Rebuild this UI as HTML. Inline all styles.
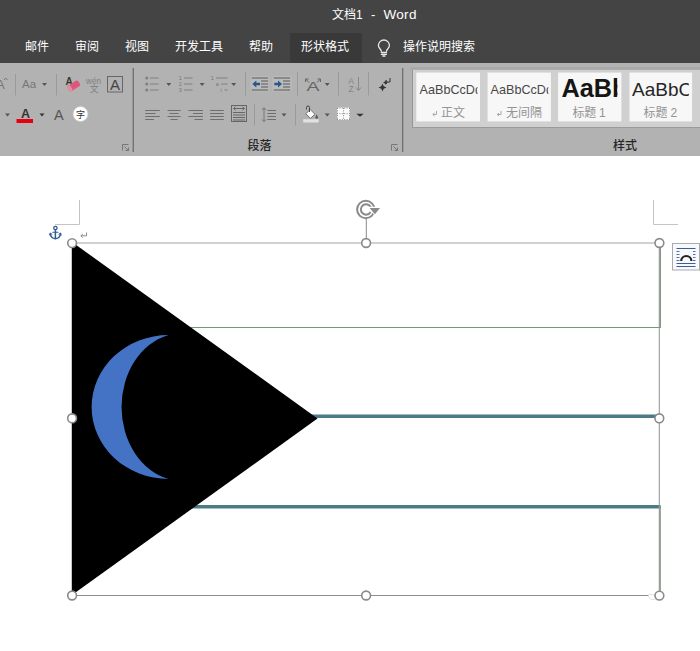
<!DOCTYPE html>
<html><head><meta charset="utf-8">
<style>
html,body{margin:0;padding:0;}
body{width:700px;height:651px;overflow:hidden;background:#fff;position:relative;font-family:"Liberation Sans","Noto Sans CJK SC",sans-serif;}
.abs{position:absolute;}
#title{left:0;top:0;width:700px;height:63px;background:#444444;}
#ribbon{left:0;top:63px;width:700px;height:92.5px;background:#b2b2b2;}
.t{position:absolute;color:#fff;font-size:12px;line-height:14px;white-space:nowrap;}
.lab{position:absolute;color:#262626;font-weight:500;font-size:12px;line-height:14px;white-space:nowrap;}
#acttab{left:290px;top:33px;width:72px;height:30px;background:#393939;}
.sep{position:absolute;width:1px;background:#7a7a7a;}
.cell{position:absolute;top:72px;height:50px;width:63px;background:#eeeeee;overflow:hidden;}
.cell .s{position:absolute;left:0;width:63px;text-align:center;white-space:nowrap;color:#222;}
.cell .n{position:absolute;left:0;width:63px;text-align:center;top:32px;font-size:12px;line-height:14px;color:#777;white-space:nowrap;}
</style></head><body>
<div id="title" class="abs"></div>
<div id="acttab" class="abs"></div>
<div class="t" style="left:332px;top:7px;font-size:12px;line-height:16px;">文档1</div><div class="t" style="left:371px;top:7px;font-size:13px;line-height:16px;">-</div><div class="t" style="left:383.500px;top:7px;font-size:13.500px;line-height:16px;letter-spacing:0.300px;">Word</div>
<div class="t" style="left:25px;top:40px;">邮件</div>
<div class="t" style="left:75px;top:40px;">审阅</div>
<div class="t" style="left:125px;top:40px;">视图</div>
<div class="t" style="left:175px;top:40px;">开发工具</div>
<div class="t" style="left:249px;top:40px;">帮助</div>
<div class="t" style="left:301px;top:40px;">形状格式</div>
<div class="t" style="left:403px;top:40px;">操作说明搜索</div>
<svg class="abs" style="left:374px;top:36px;" width="20" height="24" viewBox="374 36 20 24"><g fill="none" stroke="#e8e8e8" stroke-width="1.300" stroke-linecap="round"><path d="M381.300 51.300c0-2.300-2.900-3-2.900-5.800a5.500 5.500 0 0 1 11 0c0 2.800-2.900 3.500-2.900 5.800"/><path d="M381.300 52.500h5.200M381.300 54.300h5.200M382.800 56h2.200"/></g></svg>
<div id="ribbon" class="abs"></div>
<div class="sep" style="left:132px;top:68px;height:83.500px;width:1px;background:#969696;"></div><div class="sep" style="left:133px;top:68px;height:83.500px;width:1px;background:#737373;"></div>
<div class="sep" style="left:402px;top:68px;height:83.500px;width:1px;background:#707070;"></div><div class="sep" style="left:403px;top:68px;height:83.500px;width:1px;background:#9c9c9c;"></div>

<svg class="abs" style="left:0;top:62px;" width="700" height="93" viewBox="0 62 700 93" font-family="'Liberation Sans','Noto Sans CJK SC',sans-serif">
<!-- thin separators -->
<g stroke="#9a9a9a" stroke-width="1">
<path d="M15.5 74V95.5M56.5 74V95.5M245.5 72V95.5M297.5 72V95.5M338.5 72V95.5M368.5 72V95.5M254.5 104V125.5M295.5 104V125.5"/>
</g>
<!-- FONT GROUP row1 -->
<text x="-4" y="89" font-size="13" fill="#777">A</text>
<path d="M4 80l1.7-2 1.7 2" fill="none" stroke="#777" stroke-width="1"/>
<text x="22" y="88" font-size="11.5" fill="#777">Aa</text>
<path d="M42 83h5l-2.5 3z" fill="#555"/>
<!-- eraser -->
<text x="65.5" y="85" font-size="10" font-weight="bold" fill="#2f3f2f">A</text>
<g transform="rotate(-32 73.5 86)"><rect x="67.5" y="82.8" width="12.5" height="6.5" rx="1.8" fill="#e0557a"/><rect x="67.5" y="82.8" width="3.5" height="6.500" rx="1.5" fill="#e88aa2"/></g>
<!-- wen -->
<text x="86" y="83.8" font-size="8.5" fill="#808080" textLength="15" lengthAdjust="spacingAndGlyphs">wén</text>
<text x="89.7" y="91.8" font-size="9" fill="#808080">文</text>
<!-- boxed A -->
<rect x="107.5" y="76.5" width="15" height="15.5" fill="none" stroke="#666" stroke-width="1"/>
<text x="110" y="89.5" font-size="14" fill="#444" textLength="10" lengthAdjust="spacingAndGlyphs">A</text>
<!-- row2 -->
<path d="M5 113.5h5l-2.5 3z" fill="#555"/>
<text x="21" y="118" font-size="12.5" font-weight="bold" fill="#333">A</text>
<rect x="16.5" y="119" width="16.5" height="4" fill="#e60012"/>
<path d="M39.5 113.5h5l-2.5 3z" fill="#333"/>
<text x="54" y="120" font-size="14.5" fill="#555">A</text>
<circle cx="80.5" cy="114" r="7.5" fill="#fff" stroke="#c9c9c9" stroke-width="0.8"/>
<text x="76" y="117.5" font-size="9" fill="#333">字</text>
<!-- dialog launchers -->
<g fill="none" stroke="#777" stroke-width="1">
<path d="M122.5 150.5V144.5H128.5"/><path d="M124.5 146.5l4 4M128.5 147.5v3h-3"/>
<path d="M391.5 150.5V144.5H397.5"/><path d="M393.5 146.5l4 4M397.5 147.5v3h-3"/>
</g>
<!-- PARAGRAPH row1 : bullets -->
<g fill="#808080">
<circle cx="146.8" cy="78" r="1.6"/><circle cx="146.8" cy="84" r="1.6"/><circle cx="146.8" cy="90" r="1.6"/>
</g>
<g stroke="#808080" stroke-width="1.2">
<path d="M150 78H158.7M150 84H158.7M150 90H158.7"/>
<path d="M184 78H192.5M184 84H192.5M184 90H192.5"/>
<path d="M216 78H227.7M221 84H227.7M224.5 90H227.7"/>
</g>
<path d="M166.3 83h5l-2.5 3z" fill="#555"/>
<g font-size="5.5" fill="#777" text-anchor="middle">
<text x="180.3" y="80">1</text><text x="180.3" y="86">2</text><text x="180.3" y="92">3</text>
<text x="212.3" y="80">1</text><text x="217.3" y="86">a</text><text x="221" y="92">i</text>
</g>
<path d="M199.6 83h5l-2.5 3z" fill="#555"/>
<path d="M231.2 83h5l-2.5 3z" fill="#555"/>
<!-- indents -->
<rect x="250.5" y="76" width="19" height="15.5" rx="1.5" fill="#bbbbbb"/><rect x="272.5" y="76" width="19" height="15.5" rx="1.5" fill="#bbbbbb"/>
<g stroke="#5a5a5a" stroke-width="1.2">
<path d="M251.7 78H268.2M261 81H268.2M261 84H268.2M261 87H268.2M251.7 90H268.2"/>
<path d="M273.7 78H290.2M283 81H290.2M283 84H290.2M283 87H290.2M273.7 90H290.2"/>
</g>
<g fill="#27578f">
<path d="M252.3 84l4-3.6v2.3h3.7v2.6h-3.7v2.3z"/>
<path d="M282 84l-4-3.6v2.3h-3.7v2.6h3.7v2.3z"/>
</g>
<!-- asian layout A -->
<text x="306.5" y="90.5" font-size="12" fill="#666" textLength="13" lengthAdjust="spacingAndGlyphs">A</text>
<g fill="none" stroke="#666" stroke-width="1"><path d="M305.5 82v-3h3M305.5 79l3.5 3.5"/><path d="M320.5 82v-3h-3M320.500 79l-3.500 3.500"/></g>
<path d="M324.7 83h5l-2.5 3z" fill="#555"/>
<!-- sort -->
<g font-size="8.5" fill="#858585" text-anchor="middle"><text x="351.200" y="83.800">A</text><text x="351.200" y="91.500">Z</text></g>
<path d="M358.500 77v13M356 87.500l2.500 3 2.500-3" fill="none" stroke="#888" stroke-width="1"/>
<!-- show marks -->
<g fill="#333"><path d="M382.500 83.500l1.200 2.800 2.800 1.200-2.800 1.200-1.200 2.800-1.200-2.800-2.800-1.200 2.800-1.200z"/><path d="M385.500 80l.8 1.700 1.700.8-1.700.8-.8 1.700-.8-1.700-1.700-.8 1.700-.8z"/></g>
<path d="M390 78v4h-4.500M387 80.300l-1.800 1.700 1.800 1.700" fill="none" stroke="#333" stroke-width="1"/>
<!-- row2 aligns -->
<g stroke="#6e6e6e" stroke-width="1.100">
<path d="M145.200 110.500H159.800M145.200 113.500H155.500M145.200 116.500H159.800M145.200 119.500H154"/>
<path d="M167.500 110.500H180.600M169.500 113.500H178.600M167.500 116.500H180.600M170.500 119.500H177.600"/>
<path d="M188.400 110.500H202.900M193 113.500H202.900M188.400 116.500H202.900M194.500 119.500H202.900"/>
<path d="M210.100 110.500H223.800M210.100 113.500H223.800M210.100 116.500H223.800M210.100 119.500H223.800"/>
<path d="M267.400 110.500H276M267.400 113.500H276M267.400 116.500H276M267.400 119.500H276"/>
</g>
<!-- distributed -->
<rect x="231.500" y="105.500" width="15" height="16" fill="none" stroke="#666" stroke-width="1"/>
<g stroke="#666" stroke-width="1"><path d="M233 112.500H245M233 115H245M233 117.500H245M233 120H245"/><path d="M233.500 108.500H244.500M235.500 106.700l-2 1.800 2 1.800M242.500 106.700l2 1.800-2 1.800" fill="none"/></g>
<!-- line spacing -->
<path d="M264 108v13.500M262 110l2-2.300 2 2.300M262 119.500l2 2.300 2-2.300" fill="none" stroke="#777" stroke-width="1"/>
<path d="M281.5 113.5h5l-2.5 3z" fill="#555"/>
<!-- bucket -->
<rect x="303.200" y="119.200" width="15.500" height="3.300" fill="#e2e2e2"/>
<path d="M310.200 109.500l4.800 4.800-4.500 4-4.800-4.500z" fill="#fdfdfd" stroke="#666" stroke-width="0.900"/>
<path d="M309.500 112v-4.500a1.500 1.500 0 0 0-3 0v2" fill="none" stroke="#444" stroke-width="1"/>
<path d="M316.500 114.500c.8 1.200 1.500 2.200 1.500 3a1.300 1.300 0 0 1-2.600 0c0-.8.500-1.800 1.100-3z" fill="#555"/>
<path d="M324.7 113.5h5l-2.5 3z" fill="#555"/>
<!-- borders -->
<rect x="337" y="107.500" width="13" height="12.500" fill="#fafafa"/>
<g stroke="#888" stroke-width="1" stroke-dasharray="1 1.400" fill="none"><path d="M337.500 108V120M343.500 108V120M349.500 108V120M337 108H350M337 113.700H350M337 119.500H350"/></g>
<path d="M356.300 113.800h7.400l-3.700 3z" fill="#333"/>
</svg>

<svg class="abs" style="left:410px;top:62px;" width="290" height="70" viewBox="410 62 290 70" font-family="'Liberation Sans','Noto Sans CJK SC',sans-serif">
<rect x="410.500" y="67" width="290" height="3" fill="#a9a9a9"/>
<rect x="412.200" y="69.800" width="288" height="58" fill="#8e8e8e"/>
<rect x="413" y="69.800" width="287.300" height="57.300" fill="#d0d0d0"/>
<g fill="#f7f7f7">
<rect x="416.300" y="72.600" width="63.700" height="48.800"/>
<rect x="487.600" y="72.600" width="63.300" height="48.800"/>
<rect x="558.100" y="72.600" width="63.300" height="48.800"/>
<rect x="629.500" y="72.600" width="62.600" height="48.800"/>
</g>
<clipPath id="c1"><rect x="416.300" y="72" width="61.200" height="50"/></clipPath>
<clipPath id="c2"><rect x="487.600" y="72" width="60.800" height="50"/></clipPath>
<clipPath id="c3"><rect x="558.100" y="72" width="59.400" height="50"/></clipPath>
<clipPath id="c4"><rect x="629.500" y="72" width="59.300" height="50"/></clipPath>
<text x="419.600" y="93.600" font-size="12.600" fill="#484848" clip-path="url(#c1)">AaBbCcDd</text>
<text x="490.600" y="93.600" font-size="12.600" fill="#484848" clip-path="url(#c2)">AaBbCcDd</text>
<text x="561.500" y="96.500" font-size="25.500" font-weight="bold" fill="#151515" clip-path="url(#c3)" textLength="66" lengthAdjust="spacingAndGlyphs">AaBb</text>
<text x="632" y="96" font-size="19" fill="#262626" clip-path="url(#c4)">AaBbCc</text>
<g font-size="12" fill="#939393">
<text x="441" y="117.300">正文</text>
<text x="506" y="117.300">无间隔</text>
<text x="572.500" y="117.300" textLength="33.200">标题 1</text>
<text x="643.500" y="117.300" textLength="33.700">标题 2</text>
</g>
<g fill="none" stroke="#a8a8a8" stroke-width="1">
<path d="M436.500 111v3.500h-3.500M434.500 113l-1.700 1.500 1.700 1.500"/>
<path d="M501 111v3.500h-3.500M499 113l-1.700 1.500 1.700 1.500"/>
</g>
</svg>
<div class="lab" style="left:247.500px;top:138.500px;">段落</div>
<div class="lab" style="left:613px;top:138.500px;">样式</div>

<svg class="abs" style="left:0;top:155px;" width="700" height="496" viewBox="0 155 700 496">
<!-- page corner marks -->
<path d="M79.5 200V224.5H55" fill="none" stroke="#c4c4c4" stroke-width="1"/>
<path d="M653.5 200V224.5H678" fill="none" stroke="#c4c4c4" stroke-width="1"/>
<!-- flag lines -->
<line x1="150" y1="327.5" x2="660" y2="327.5" stroke="#6f9a6f" stroke-width="1"/>
<line x1="250" y1="416.200" x2="659.500" y2="416.200" stroke="#4b7c84" stroke-width="3.400"/>
<line x1="150" y1="506.700" x2="660.600" y2="506.700" stroke="#4b7c84" stroke-width="3.400"/>
<line x1="660.200" y1="247" x2="660.200" y2="328" stroke="#7b937a" stroke-width="1.500"/>
<line x1="660" y1="506" x2="660" y2="591" stroke="#7b937a" stroke-width="1.600"/>
<!-- selection box -->
<g stroke="#a3a3a3" stroke-width="1.200" fill="none"><path d="M72 243H659.300"/><path d="M72 243V595.500"/></g>
<path d="M659.300 243V595.500" stroke="#9a9a9a" stroke-width="1.100" fill="none"/>
<path d="M72 595.500H659.300" stroke="#8e8e8e" stroke-width="1" fill="none"/>
<!-- triangle -->
<polygon points="72,242 317.500,418.500 72,595" fill="#000"/>
<!-- crescent -->
<path d="M168.6 335 A77 72 0 0 0 168.6 479 A61.2 74 0 0 1 168.6 335Z" fill="#4472c4"/>
<!-- rotate handle -->
<line x1="366.300" y1="218.500" x2="366.300" y2="238" stroke="#8a8a8a" stroke-width="1"/>

<!-- rotate icon -->
<g fill="none" stroke="#8a8a8a">
<circle cx="365.800" cy="209.500" r="8.700" stroke-width="2"/>
<path d="M370.600 212a5.200 5.200 0 1 1 .3-4.500" stroke-width="2"/>
</g>
<path d="M367.300 206.700h15l-7.300 9z" fill="#fff"/>
<path d="M369.600 208h10.400l-5.100 6.200z" fill="#8a8a8a"/>
<!-- anchor -->
<g fill="none" stroke="#2e5b94" stroke-width="1.500" stroke-linecap="round">
<circle cx="55.400" cy="228" r="1.700" stroke-width="1.300"/>
<path d="M55.400 229.800V238.500"/>
<path d="M52.800 232.200h5.200" stroke-width="1.100"/>
<path d="M50.300 233.500c.3 3.200 2.400 5 5.100 5.200 2.700-.2 4.800-2 5.100-5.200"/>
<path d="M49.600 235l.7-1.800 1.600 1M61.200 235l-.7-1.800-1.600 1" stroke-width="1"/>
</g>
<!-- paragraph return mark -->
<path d="M86.500 232.500v3.300h-5.500M82.800 234l-2 1.800 2 1.800" fill="none" stroke="#8c8c8c" stroke-width="1"/>
<!-- layout options button -->
<rect x="672.500" y="243.500" width="27" height="26.500" fill="#f7f9fc" stroke="#ababab" stroke-width="1"/>
<g stroke="#3b5f94" stroke-width="1.200">
<path d="M676.500 248.500H695.500M676.500 263.500H695.500M676.500 266.500H695.500"/>
<path d="M676.500 251.500H679.500M693 251.500H695.500M676.500 254.500H679.500M693 254.500H695.500M676.500 257.500H679.500M693 257.500H695.500M676.500 260.500H679.500M693 260.500H695.500" stroke="#4f74aa"/>
</g>
<path d="M681.200 261a5.100 5 0 0 1 10.200 0" fill="none" stroke="#222" stroke-width="2.200"/>
<!-- faint cursor over corner -->
<path d="M648.500 594.500l5 .3 2.500 1.500-1 3.500-4.500-.6-2-2.200z" fill="#fff" stroke="#dcdcdc" stroke-width="0.800"/>
<!-- handles -->
<g fill="#fff" stroke="#8a8a8a" stroke-width="1.600">
<circle cx="72.100" cy="243.100" r="4.400"/><circle cx="366.100" cy="243" r="4.400"/><circle cx="659.400" cy="243" r="4.400"/>
<circle cx="72.100" cy="418.300" r="4.400"/><circle cx="659.300" cy="418.300" r="4.400"/>
<circle cx="72.100" cy="595.500" r="4.400"/><circle cx="366.100" cy="595.500" r="4.400"/><circle cx="659.400" cy="595.600" r="4.400"/>
</g>
</svg>
</body></html>
